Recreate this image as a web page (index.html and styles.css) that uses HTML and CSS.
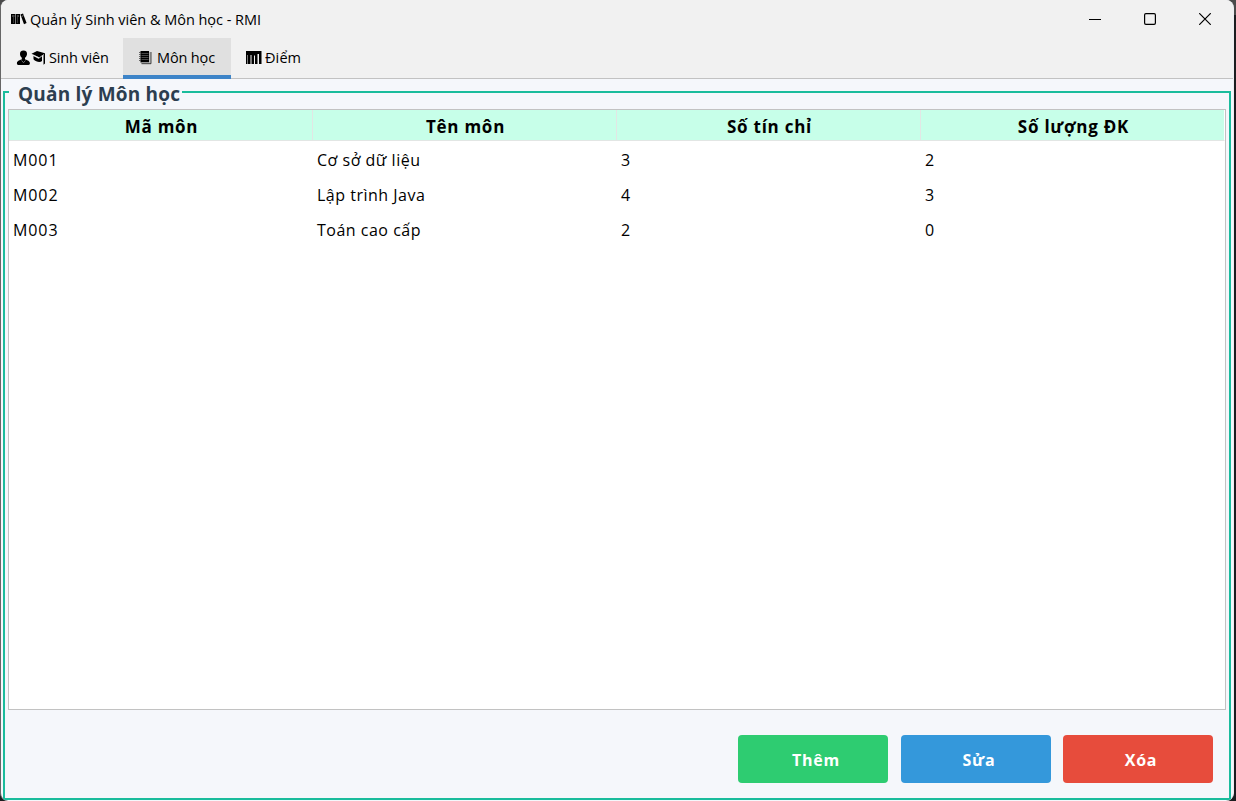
FILE: index.html
```html
<!DOCTYPE html>
<html lang="vi">
<head>
<meta charset="utf-8">
<title>Quản lý Sinh viên &amp; Môn học - RMI</title>
<link rel="stylesheet" href="styles.css">
</head>
<body>
<div class="window">
  <header class="titlebar">
    <svg class="app-icon" width="16" height="12" viewBox="0 0 16 12"><path d="M0 1h4.500v10H0zM5 1h4v10H5zM9.400 1.600l2.600-1 3.600 9.400-2.600 1.200z"/><path d="M1 3h2.500M6 3h2M10.600 3.400l1.800-.7" stroke="#aaa" stroke-width=".8"/><path d="M2.500 4v6M6.500 4v6" stroke="#555" stroke-width=".6"/></svg>
    <span class="title">Quản lý Sinh viên &amp; Môn học - RMI</span>
    <div class="controls">
      <svg width="12" height="12" viewBox="0 0 12 12"><path d="M0 6.500h12" stroke-width="1"/></svg>
      <svg width="12" height="12" viewBox="0 0 12 12"><rect x=".6" y=".6" width="10.8" height="10.8" rx="1.3"/></svg>
      <svg width="12" height="12" viewBox="0 0 12 12"><path d="M.2.2l11.600 11.600M11.800.2L.2 11.800"/></svg>
    </div>
  </header>
  <nav class="tabs">
    <div class="tab tab-students">
      <svg width="30" height="16" viewBox="0 0 30 16"><path d="M7.500.5C10 .5 11.300 2 11 4.200c-.2 1.600-.9 2.600-1.800 3.400L8.900 9.200c1.300.8 4.600 1 5 3.800.1 1.300-.5 2-1.400 2H2.300c-.9 0-1.500-.7-1.400-2 .4-2.800 3.800-3 5-3.800l-.2-1.600C4.800 6.800 4.100 5.800 4 4.200 3.800 2 5 .5 7.500.5z"/><path d="M5.600 10.500l1.900 2.200 1.900-2.200" stroke="#999" stroke-width=".7" fill="none"/><path d="M15.500 3.800L21 1l8 2.200-5.500 4.300zM17.500 6l5 2.700L26 6v5c-1.800 1.800-6 1-8.500-1.700zM27.500 3.500h1.500v10l-1.500 1.300z"/><path d="M16.800 5l6.400 2.900 4.800-3.500" stroke="#ddd" stroke-width=".6" fill="none"/></svg>
      <span>Sinh viên</span>
    </div>
    <div class="tab tab-subjects">
      <svg width="13" height="15" viewBox="0 0 13 15"><path d="M1.500 1H10v11.500H1.500z"/><path d="M10 2h2v12H2.500v-1.500H10z" fill="#bbb"/><path d="M12 2v11.700H2.500" stroke="#222" stroke-width=".8" fill="none"/><path d="M2.500 3.500h7M2.500 5.500h7M2.500 7.500h7M2.500 9.500h7" stroke="#777" stroke-width=".6"/><path d="M0 2.500h2M0 4.500h2M0 6.500h2M0 8.500h2M0 10.500h2" stroke="#444" stroke-width=".8"/></svg>
      <span>Môn học</span>
    </div>
    <div class="tab tab-scores">
      <svg width="16" height="13" viewBox="0 0 16 13"><path d="M0 0h15.500v13H13V3h-1.500v10H9V4.500H8V13H5.500V4h-1v9H0z"/><path d="M1.500 4v9" stroke="#999" stroke-width=".8"/></svg>
      <span>Điểm</span>
    </div>
  </nav>
  <main class="page">
    <fieldset class="panel">
      <legend>Quản lý Môn học</legend>
      <div class="scroll">
        <table>
          <thead><tr><th>Mã môn</th><th>Tên môn</th><th>Số tín chỉ</th><th>Số lượng ĐK</th></tr></thead>
          <tbody>
            <tr><td>M001</td><td>Cơ sở dữ liệu</td><td>3</td><td>2</td></tr>
            <tr><td>M002</td><td>Lập trình Java</td><td>4</td><td>3</td></tr>
            <tr><td>M003</td><td>Toán cao cấp</td><td>2</td><td>0</td></tr>
          </tbody>
        </table>
      </div>
      <div class="actions">
        <button class="btn add">Thêm</button>
        <button class="btn edit">Sửa</button>
        <button class="btn delete">Xóa</button>
      </div>
    </fieldset>
  </main>
</div>
</body>
</html>
```

FILE: styles.css
```css
* { box-sizing: border-box; }
body {
  margin: 0;
  height: 801px;
  overflow: hidden;
  background: linear-gradient(#4a4a4a 0 15px, #1b1d1f 15px);
  font-family: "Open Sans", "Noto Sans", sans-serif;
  color: #000;
}
.window {
  width: 1234px;
  height: 801px;
  display: flex;
  flex-direction: column;
  background: #f5f7fb;
  border-left: 1px solid #666;
  border-right: 1px solid #eceef2;
  border-radius: 8px;
  overflow: hidden;
}
.titlebar {
  height: 38px;
  flex: none;
  display: flex;
  align-items: center;
  background: #f1f1f1;
  padding: 0 22px 0 10px;
}
.app-icon { margin-right: 3px; }
.title { font-size: 14.5px; letter-spacing: -0.03px; white-space: nowrap; }
.controls { margin-left: auto; display: flex; gap: 43px; }
.controls svg { fill: none; stroke: #000; stroke-width: 1.2; }
.tabs {
  height: 41px;
  flex: none;
  display: flex;
  background: #f1f1f1;
  border-bottom: 1px solid #c2c2c2;
}
.tab {
  height: 40px;
  display: flex;
  align-items: center;
  padding-bottom: 1px;
  white-space: nowrap;
  font-size: 14.5px;
  letter-spacing: -0.15px;
}
.tab svg { flex: none; }
.tab-students { width: 122px; padding-left: 15px; gap: 3px; }
.tab-subjects {
  width: 108px;
  height: 41px;
  padding: 2px 0 0 16px;
  gap: 5px;
  background: #e0e0e0;
  border-bottom: 4px solid #3d84c8;
}
.tab-scores { padding-left: 15px; gap: 3px; letter-spacing: 0.1px; }
.page { flex: 1; padding: 0 2px 1px; }
.panel {
  margin: 0;
  padding: 0 3px;
  min-width: 0;
  height: 721px;
  border: 2px solid #1abc9c;
  display: block;
}
.panel legend {
  height: 26px;
  margin-left: 1px;
  padding: 4px 2px 0 9px;
  font-size: 19px;
  line-height: 22px;
  letter-spacing: 0.2px;
  font-weight: 700;
  color: #2c3e50;
  white-space: nowrap;
}
.scroll {
  height: 601px;
  margin-top: 4px;
  border: 1px solid #c2c2c2;
  background: #fff;
}
table { width: 1216px; table-layout: fixed; border-collapse: separate; border-spacing: 0; }
th {
  height: 31px;
  padding: 3px 0 0 2px;
  background: #c7ffe9;
  border-right: 1px solid #e2e6e4;
  border-bottom: 1px solid #e2e6e4;
  font-size: 17px;
  line-height: 20px;
  letter-spacing: 0.75px;
}
th:last-child { border-right-color: #fff; }
td {
  height: 35px;
  padding: 3px 4px 0;
  font-size: 16px;
  line-height: 20px;
  letter-spacing: 0.5px;
}
td:first-child { letter-spacing: 0.9px; }
.actions {
  display: flex;
  justify-content: flex-end;
  gap: 12px;
  padding: 25px 13px 0 0;
}
.btn {
  width: 150px;
  height: 48px;
  padding: 2px 0 0 6px;
  border: 0;
  border-radius: 4px;
  color: #fff;
  font: 700 16px "Open Sans", "Noto Sans", sans-serif;
  letter-spacing: 0.8px;
}
.add { background: #2ecc71; margin-right: 1px; }
.edit { background: #3498db; }
.delete { background: #e74c3c; }
```
